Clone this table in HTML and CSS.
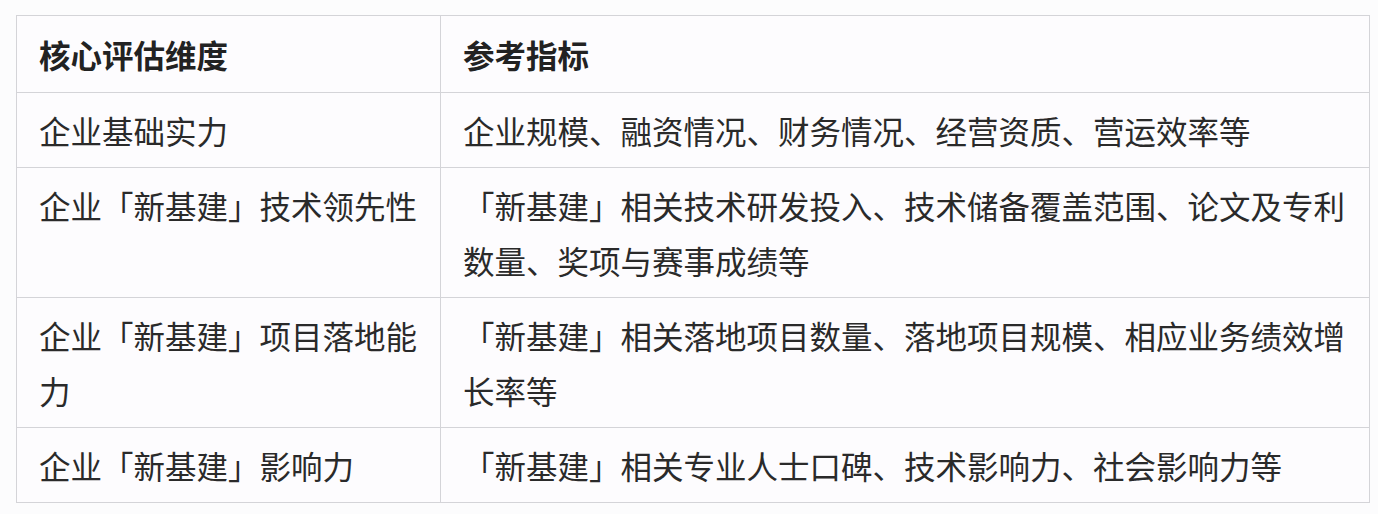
FILE: index.html
```html
<!DOCTYPE html>
<html lang="zh-CN">
<head>
<meta charset="utf-8">
<link rel="stylesheet" href="styles.css">
</head>
<body>
<table class="grid">
  <colgroup><col class="c1"><col class="c2"></colgroup>
  <thead>
    <tr><th>核心评估维度</th><th>参考指标</th></tr>
  </thead>
  <tbody>
    <tr><td>企业基础实力</td><td>企业规模、融资情况、财务情况、经营资质、营运效率等</td></tr>
    <tr><td>企业「新基建」技术领先性</td><td>「新基建」相关技术研发投入、技术储备覆盖范围、论文及专利数量、奖项与赛事成绩等</td></tr>
    <tr><td>企业「新基建」项目落地能力</td><td>「新基建」相关落地项目数量、落地项目规模、相应业务绩效增长率等</td></tr>
    <tr><td>企业「新基建」影响力</td><td>「新基建」相关专业人士口碑、技术影响力、社会影响力等</td></tr>
  </tbody>
</table>
</body>
</html>
```
FILE: styles.css
```css
html, body {
  margin: 0;
  background: #fcfcfd;
}
body {
  padding: 15px 0 0 16px;
  font-family: "Noto Sans CJK SC", "Noto Sans", sans-serif;
  color: #2a2a2a;
}
.grid {
  border-collapse: collapse;
  table-layout: fixed;
  width: 1353px;
  background: #fdfcfe;
}
.c1 { width: 424px; }
.c2 { width: 929px; }
.grid th, .grid td {
  border: 1px solid #d4d4d8;
  font-size: 31.5px;
  line-height: 55px;
  padding: 9.5px 21px 9.5px 22px;
  text-align: left;
  vertical-align: top;
  font-weight: 400;
}
.grid th {
  font-weight: 700;
  padding-top: 10.5px;
  padding-bottom: 10.5px;
  color: #222;
}
```
